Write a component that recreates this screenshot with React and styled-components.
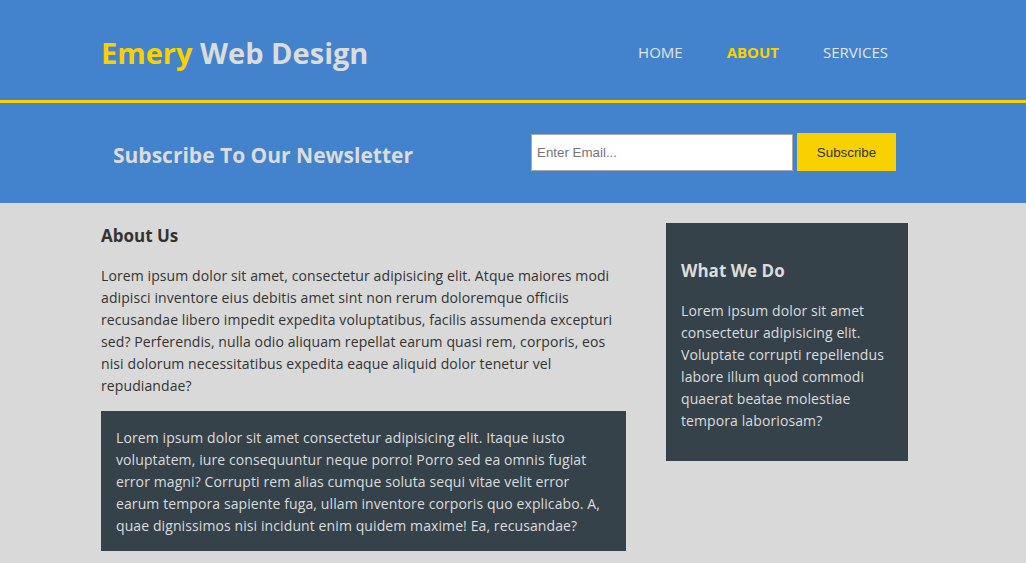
import styled, { createGlobalStyle } from "styled-components";

const GlobalStyle = createGlobalStyle`
  * { box-sizing: border-box; }
  body {
    margin: 0;
    background: #d9d9d9;
    font-family: "Open Sans", "Noto Sans", sans-serif;
    font-size: 14px;
    line-height: 22px;
    letter-spacing: 0.1px;
    color: #333;
  }
`;

const Container = styled.div`
  width: 807px;
  margin-left: 101px;
`;

const Header = styled.header`
  background: #4383ce;
  border-bottom: 3px solid #f9d100;
  height: 103px;
  ${Container} {
    height: 100px;
    padding-top: 5px;
    display: flex;
    align-items: center;
    justify-content: space-between;
  }
`;

const Logo = styled.h1`
  margin: 0;
  font-size: 29px;
  font-weight: 700;
  letter-spacing: 0;
  color: #dcdcdc;
  span {
    color: #f9d100;
  }
`;

const Nav = styled.ul`
  list-style: none;
  margin: 0 0 2px;
  padding: 0;
  display: flex;
`;

const NavItem = styled.li`
  padding: 0 22px;
  font-size: 15px;
  letter-spacing: 0;
  text-transform: uppercase;
  font-weight: ${(p) => (p.$active ? 700 : 400)};
  color: ${(p) => (p.$active ? "#f9d100" : "#e3e3e3")};
  &:last-child {
    padding-right: 20px;
  }
`;

const Newsletter = styled.section`
  background: #4383ce;
  height: 100px;
  ${Container} {
    height: 100%;
    display: flex;
    align-items: center;
    justify-content: space-between;
  }
`;

const NewsTitle = styled.h1`
  margin: 3px 0 0 12px;
  font-size: 21px;
  font-weight: 700;
  letter-spacing: 0;
  color: #dcdcdc;
`;

const Form = styled.form`
  display: flex;
  align-items: center;
  gap: 4px;
  margin: 0 12px 2px 0;
`;

const EmailInput = styled.input`
  width: 262px;
  height: 37px;
  padding: 4px 5px;
  border: 1px solid #a9a9a9;
  font: 13.33px "Liberation Sans", Arial, sans-serif;
  color: #333;
  &::placeholder {
    color: #757575;
  }
`;

const SubscribeButton = styled.button`
  width: 99px;
  height: 38px;
  border: none;
  background: #f9d100;
  color: #333;
  font: 13.33px "Liberation Sans", Arial, sans-serif;
`;

const Main = styled.section`
  ${Container} {
    display: flex;
    justify-content: space-between;
    align-items: flex-start;
  }
`;

const MainCol = styled.article`
  width: 525px;
`;

const PageTitle = styled.h1`
  margin: 21px 0 17px;
  font-size: 17px;
  line-height: 24px;
  font-weight: 700;
  letter-spacing: 0;
  color: #333;
`;

const Text = styled.p`
  margin: 0;
  color: ${(p) => (p.$light ? "#dcdcdc" : "#333")};
`;

const DarkBox = styled.div`
  background: #35424a;
  margin-top: 14px;
  padding: 16px 15px 14px;
`;

const Sidebar = styled.aside`
  width: 242px;
  margin-top: 20px;
  background: #35424a;
  padding: 36px 15px 29px;
`;

const SideTitle = styled.h3`
  margin: 0 0 17px;
  font-size: 17px;
  line-height: 24px;
  font-weight: 700;
  letter-spacing: 0;
  color: #dcdcdc;
`;

export default function App() {
  return (
    <>
      <GlobalStyle />
      <Header>
        <Container>
          <Logo>
            <span>Emery</span> Web Design
          </Logo>
          <Nav>
            <NavItem>Home</NavItem>
            <NavItem $active>About</NavItem>
            <NavItem>Services</NavItem>
          </Nav>
        </Container>
      </Header>
      <Newsletter>
        <Container>
          <NewsTitle>Subscribe To Our Newsletter</NewsTitle>
          <Form onSubmit={(e) => e.preventDefault()}>
            <EmailInput type="email" placeholder="Enter Email..." />
            <SubscribeButton type="submit">Subscribe</SubscribeButton>
          </Form>
        </Container>
      </Newsletter>
      <Main>
        <Container>
          <MainCol>
            <PageTitle>About Us</PageTitle>
            <Text>
              Lorem ipsum dolor sit amet, consectetur adipisicing elit. Atque
              maiores modi adipisci inventore eius debitis amet sint non rerum
              doloremque officiis recusandae libero impedit expedita
              voluptatibus, facilis assumenda excepturi sed? Perferendis, nulla
              odio aliquam repellat earum quasi rem, corporis, eos nisi dolorum
              necessitatibus expedita eaque aliquid dolor tenetur vel
              repudiandae?
            </Text>
            <DarkBox>
              <Text $light>
                Lorem ipsum dolor sit amet consectetur adipisicing elit. Itaque
                iusto voluptatem, iure consequuntur neque porro! Porro sed ea
                omnis fugiat error magni? Corrupti rem alias cumque soluta sequi
                vitae velit error earum tempora sapiente fuga, ullam inventore
                corporis quo explicabo. A, quae dignissimos nisi incidunt enim
                quidem maxime! Ea, recusandae?
              </Text>
            </DarkBox>
          </MainCol>
          <Sidebar>
            <SideTitle>What We Do</SideTitle>
            <Text $light>
              Lorem ipsum dolor sit amet consectetur adipisicing elit.
              Voluptate corrupti repellendus labore illum quod commodi quaerat
              beatae molestiae tempora laboriosam?
            </Text>
          </Sidebar>
        </Container>
      </Main>
    </>
  );
}
